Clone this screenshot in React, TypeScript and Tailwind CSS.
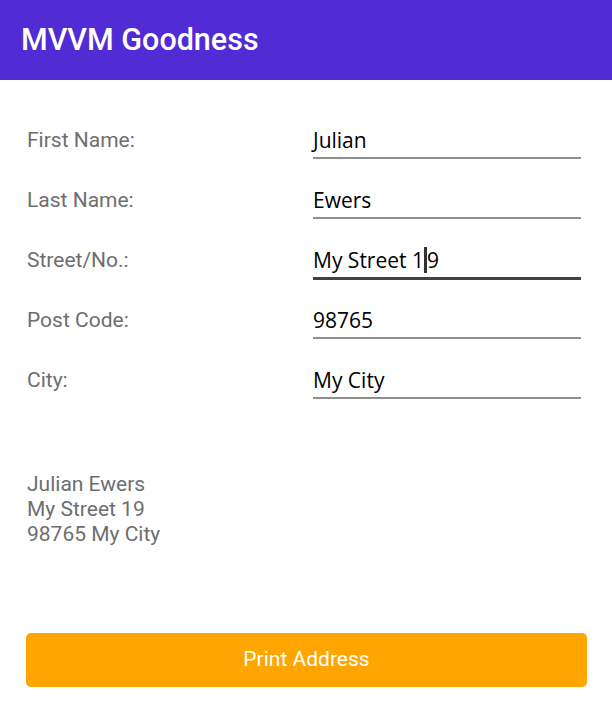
import React from 'react';

const fields = [
  { label: 'First Name:', value: 'Julian' },
  { label: 'Last Name:', value: 'Ewers' },
  { label: 'Street/No.:', value: 'My Street 19', focused: true },
  { label: 'Post Code:', value: '98765' },
  { label: 'City:', value: 'My City' },
];

const roboto = { fontFamily: 'Roboto, "Liberation Sans", sans-serif' };

export default function App() {
  return (
    <div className="w-[612px] h-[716px] bg-white" style={roboto}>
      <header className="h-[80px] bg-[#512bd4] flex items-center pl-[21px]">
        <h1 className="text-white text-[30.5px] font-medium">MVVM Goodness</h1>
      </header>

      <div className="pl-[27px] pr-[31px] pt-[46px]">
        {fields.map((f) => (
          <div key={f.label} className="flex items-start h-[60px]">
            <div className="w-[286px] text-[21px] leading-[28px] text-[#6e6e6e]">{f.label}</div>
            <div
              className={
                'flex-1 pb-[3px] ' +
                (f.focused ? 'border-b-[3px] border-[#424242]' : 'border-b-2 border-[#8f8f8f]')
              }
            >
              <div
                className="text-[21px] leading-[28px] text-black"
                style={{ fontFamily: '"Open Sans", "Noto Sans", sans-serif' }}
              >
                {f.focused ? (
                  <>
                    My Street 1
                    <span className="inline-block w-[3px] h-[26px] bg-[#333] align-[-5px]" />
                    9
                  </>
                ) : (
                  f.value
                )}
              </div>
            </div>
          </div>
        ))}

        <div className="mt-[46px] text-[21px] leading-[25px] text-[#6e6e6e]">
          <div>Julian Ewers</div>
          <div>My Street 19</div>
          <div>98765 My City</div>
        </div>
      </div>

      <div className="pl-[26px] pr-[25px] mt-[86px]">
        <button className="w-full h-[54px] rounded-[5px] bg-[#ffa500] text-white text-[21px] font-normal">
          Print Address
        </button>
      </div>
    </div>
  );
}
